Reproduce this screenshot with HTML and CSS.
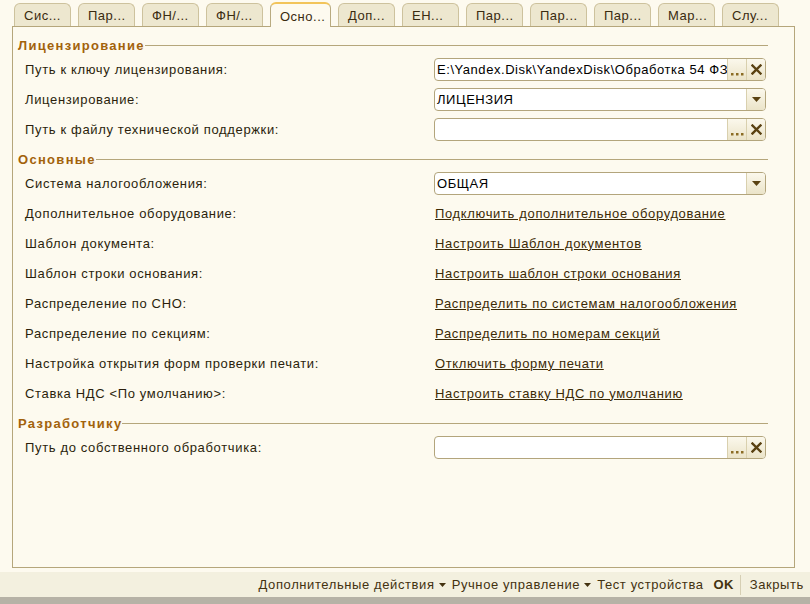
FILE: index.html
```html
<!DOCTYPE html>
<html lang="ru">
<head>
<meta charset="utf-8">
<link rel="stylesheet" href="styles.css">
</head>
<body>
<div class="window">
  <div class="tabs">
    <div class="tab">Сис...</div>
    <div class="tab">Пар...</div>
    <div class="tab">ФН/...</div>
    <div class="tab">ФН/...</div>
    <div class="tab active">Осно...</div>
    <div class="tab">Доп...</div>
    <div class="tab">ЕН...</div>
    <div class="tab">Пар...</div>
    <div class="tab">Пар...</div>
    <div class="tab">Пар...</div>
    <div class="tab">Мар...</div>
    <div class="tab">Слу...</div>
  </div>
  <div class="panel">
    <div class="section">
      <div class="sec-head"><span>Лицензирование</span><i class="rule"></i></div>
      <div class="row">
        <div class="label">Путь к ключу лицензирования:</div>
        <div class="field">
          <div class="value">E:\Yandex.Disk\YandexDisk\Обработка 54 ФЗ\</div>
          <div class="btn dots"><svg width="15" height="3" viewBox="0 0 15 3"><rect x="1" y="0" width="2.5" height="2.5" fill="#8b6c24"/><rect x="6" y="0" width="2.5" height="2.5" fill="#8b6c24"/><rect x="11" y="0" width="2.5" height="2.5" fill="#8b6c24"/></svg></div>
          <div class="btn clear"><svg width="11" height="11" viewBox="0 0 11 11"><path d="M1.5 1.5 L9.5 9.5 M9.5 1.5 L1.5 9.5" stroke="#5a4212" stroke-width="2.4" stroke-linecap="square"/></svg></div>
        </div>
      </div>
      <div class="row">
        <div class="label">Лицензирование:</div>
        <div class="field">
          <div class="value">ЛИЦЕНЗИЯ</div>
          <div class="btn arrow"><svg width="9" height="5" viewBox="0 0 9 5"><path d="M0 0 H9 L4.5 5 Z" fill="#5a4212"/></svg></div>
        </div>
      </div>
      <div class="row">
        <div class="label">Путь к файлу технической поддержки:</div>
        <div class="field">
          <div class="value"></div>
          <div class="btn dots"><svg width="15" height="3" viewBox="0 0 15 3"><rect x="1" y="0" width="2.5" height="2.5" fill="#8b6c24"/><rect x="6" y="0" width="2.5" height="2.5" fill="#8b6c24"/><rect x="11" y="0" width="2.5" height="2.5" fill="#8b6c24"/></svg></div>
          <div class="btn clear"><svg width="11" height="11" viewBox="0 0 11 11"><path d="M1.5 1.5 L9.5 9.5 M9.5 1.5 L1.5 9.5" stroke="#5a4212" stroke-width="2.4" stroke-linecap="square"/></svg></div>
        </div>
      </div>
    </div>

    <div class="section">
      <div class="sec-head"><span>Основные</span><i class="rule"></i></div>
      <div class="row">
        <div class="label">Система налогообложения:</div>
        <div class="field">
          <div class="value">ОБЩАЯ</div>
          <div class="btn arrow"><svg width="9" height="5" viewBox="0 0 9 5"><path d="M0 0 H9 L4.5 5 Z" fill="#5a4212"/></svg></div>
        </div>
      </div>
      <div class="row">
        <div class="label">Дополнительное оборудование:</div>
        <a class="link">Подключить дополнительное оборудование</a>
      </div>
      <div class="row">
        <div class="label">Шаблон документа:</div>
        <a class="link">Настроить Шаблон документов</a>
      </div>
      <div class="row">
        <div class="label">Шаблон строки основания:</div>
        <a class="link">Настроить шаблон строки основания</a>
      </div>
      <div class="row">
        <div class="label">Распределение по СНО:</div>
        <a class="link">Распределить по системам налогообложения</a>
      </div>
      <div class="row">
        <div class="label">Распределение по секциям:</div>
        <a class="link">Распределить по номерам секций</a>
      </div>
      <div class="row">
        <div class="label">Настройка открытия форм проверки печати:</div>
        <a class="link">Отключить форму печати</a>
      </div>
      <div class="row">
        <div class="label">Ставка НДС &lt;По умолчанию&gt;:</div>
        <a class="link">Настроить ставку НДС по умолчанию</a>
      </div>
    </div>

    <div class="section">
      <div class="sec-head"><span>Разработчику</span><i class="rule"></i></div>
      <div class="row">
        <div class="label">Путь до собственного обработчика:</div>
        <div class="field">
          <div class="value"></div>
          <div class="btn dots"><svg width="15" height="3" viewBox="0 0 15 3"><rect x="1" y="0" width="2.5" height="2.5" fill="#8b6c24"/><rect x="6" y="0" width="2.5" height="2.5" fill="#8b6c24"/><rect x="11" y="0" width="2.5" height="2.5" fill="#8b6c24"/></svg></div>
          <div class="btn clear"><svg width="11" height="11" viewBox="0 0 11 11"><path d="M1.5 1.5 L9.5 9.5 M9.5 1.5 L1.5 9.5" stroke="#5a4212" stroke-width="2.4" stroke-linecap="square"/></svg></div>
        </div>
      </div>
    </div>
  </div>
  <div class="footer">
    <span class="act">Дополнительные действия</span><svg class="tri" width="7" height="4" viewBox="0 0 7 4"><path d="M0 0 H7 L3.5 4 Z" fill="#433210"/></svg>
    <span class="act">Ручное управление</span><svg class="tri" width="7" height="4" viewBox="0 0 7 4"><path d="M0 0 H7 L3.5 4 Z" fill="#433210"/></svg>
    <span class="act">Тест устройства</span>
    <span class="act ok">OK</span>
    <span class="sep"></span>
    <span class="act">Закрыть</span>
  </div>
  <div class="statusline"></div>
</div>
</body>
</html>
```
FILE: styles.css
```css
* { box-sizing: border-box; }
html, body {
  margin: 0;
  padding: 0;
  background: #fdfaef;
}
body {
  font-family: "Liberation Sans", Arial, sans-serif;
  font-size: 13px;
  letter-spacing: 0.65px;
  color: #2b1f0c;
  width: 810px;
  height: 604px;
  overflow: hidden;
}
.window {
  display: flex;
  flex-direction: column;
  height: 604px;
}
.tabs {
  display: flex;
  align-items: flex-end;
  gap: 7px;
  padding-left: 14px;
  height: 27px;
  position: relative;
  z-index: 2;
}
.tab {
  width: 57px;
  height: 23px;
  margin-bottom: 1px;
  padding: 4px 0 0 9px;
  background: #ede7cf;
  border: 1px solid #cdc29d;
  border-bottom: none;
  border-radius: 6px 6px 0 0;
  color: #3a2b10;
  white-space: nowrap;
  letter-spacing: 0.5px;
}
.tab.active {
  width: 61px;
  height: 25px;
  margin-bottom: 0;
  padding-top: 5px;
  background: #fdfaef;
  border-color: #b9ab80;
  border-top: 2px solid #f2c45a;
}
.panel {
  margin-left: 12px;
  width: 783px;
  height: 542px;
  margin-top: -1px;
  border: 1px solid #b5a67b;
  padding: 9px 0 0 0;
}
.section + .section { margin-top: 6px; }
.sec-head {
  display: flex;
  align-items: center;
  height: 18px;
  padding-left: 5px;
  padding-right: 26px;
  color: #a2620b;
  font-weight: bold;
  font-size: 13px;
  letter-spacing: 1.3px;
}
.rule {
  flex: 1;
  height: 1px;
  background: #b5a67b;
  margin-left: 0;
}
.row {
  display: grid;
  grid-template-columns: 409px 332px;
  align-items: center;
  height: 30px;
  padding-left: 12px;
}
.label {
  white-space: nowrap;
  color: #2b1f0c;
}
.field {
  display: flex;
  height: 23px;
  background: #fff;
  border: 1px solid #b3a57c;
  border-radius: 4px;
  overflow: hidden;
}
.value {
  flex: 1;
  min-width: 0;
  overflow: hidden;
  white-space: nowrap;
  padding: 3px 0 0 2px;
  color: #000;
  letter-spacing: 0.55px;
}
.btn {
  width: 19px;
  flex: none;
  display: flex;
  align-items: center;
  justify-content: center;
  background: linear-gradient(#fbf8ec, #ebe4c9);
  border-left: 1px solid #d9d0ae;
}
.btn.dots svg { margin-top: 10px; margin-left: 1px; }
.btn.arrow svg { margin-top: 1px; }
.link {
  color: #3c2a06;
  text-decoration: underline;
  white-space: nowrap;
  justify-self: start;
  margin-left: 1px;
}
.footer {
  margin-top: 4px;
  height: 25px;
  background: #f3f0df;
  display: flex;
  justify-content: flex-end;
  align-items: center;
  padding-right: 6px;
  color: #433210;
  font-size: 13px;
  letter-spacing: 0.6px;
}
.act { white-space: nowrap; margin-left: 6px; }
.tri { margin-left: 4px; margin-top: 1px; }
.ok { font-weight: bold; margin-left: 10px; letter-spacing: 0.3px; }
.sep {
  width: 1px;
  height: 20px;
  background: #d6cfb4;
  margin-left: 6px;
  margin-right: 3px;
}
.statusline {
  flex: 1;
  background: #b6b2a6;
}
```
